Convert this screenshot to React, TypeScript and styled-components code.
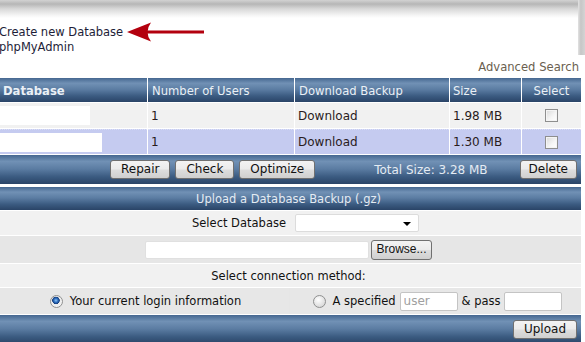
import styled, { createGlobalStyle } from "styled-components"

const FONT = `"DejaVu Sans", Verdana, sans-serif`

const Global = createGlobalStyle`
  html, body {
    margin: 0;
    padding: 0;
    background: #fff;
    overflow: hidden;
  }
  body {
    font-family: ${FONT};
    font-size: 11.5px;
  }
`

const barGradient = `linear-gradient(#456790 0%, #7191b5 22%, #5b7ca2 48%, #3b5b81 75%, #2a4467 100%)`

const Page = styled.div`
  width: 589px;
  margin-left: -4px;
`

const TopFrame = styled.div`
  height: 55px;
  display: flex;
  background: linear-gradient(#d2d2d2 0, #b6b6b6 4px, #d9d9d9 9px, #f4f4f4 15px, #fff 18px);
`

const TopContent = styled.div`
  flex: 1;
  padding: 25px 0 0 3px;
  display: flex;
  flex-direction: column;
  gap: 1px;
`

const ShadowStrip = styled.div`
  width: 7px;
  background: linear-gradient(to right, #e2e2e2, #c6c6c6 40%, #d4d4d4);
`

const CreateLine = styled.div`
  display: flex;
  align-items: center;
  height: 14px;
`

const NavLink = styled.span`
  color: #1d1d38;
  font-size: 11.5px;
  line-height: 14px;
`

const Arrow = styled.svg`
  margin-left: 3px;
  flex: none;
`

const AdvancedRow = styled.div`
  height: 23px;
  display: flex;
  align-items: center;
  justify-content: flex-end;
  padding-right: 6px;
  padding-top: 1px;
  box-sizing: border-box;
  color: #6a604f;
  font-size: 11.6px;
`

const Grid = styled.div`
  width: 585px;
  display: grid;
  grid-template-columns: 151px 146px 154px 71px 59px;
  column-gap: 1px;
  row-gap: 1px;
  background: #fff;
`

const HeadCell = styled.div<{ $bold?: boolean; $center?: boolean; $pad: number }>`
  height: 24px;
  display: flex;
  align-items: center;
  justify-content: ${(p) => (p.$center ? "center" : "flex-start")};
  padding-left: ${(p) => p.$pad}px;
  background: ${barGradient};
  color: #eaf0f6;
  font-weight: ${(p) => (p.$bold ? "bold" : "normal")};
  font-size: 11.6px;
  padding-top: 1px;
  box-sizing: border-box;
`

const Cell = styled.div<{ $alt?: boolean; $center?: boolean }>`
  height: 25px;
  display: flex;
  align-items: center;
  justify-content: ${(p) => (p.$center ? "center" : "flex-start")};
  padding-left: ${(p) => (p.$center ? 0 : 3)}px;
  background: ${(p) => (p.$alt ? "#c5cbf0" : "#f1f1f1")};
  border-top: ${(p) => (p.$alt ? "1px dotted #d9ddf6" : "none")};
  box-sizing: border-box;
  color: #2a1c1c;
  font-size: 12px;
`

const Redacted = styled.div<{ $w: number }>`
  width: ${(p) => p.$w}px;
  height: 19px;
  background: #fff;
  margin-left: -3px;
`

const Checkbox = styled.span`
  width: 11px;
  height: 11px;
  border: 1px solid #8e8e8e;
  background: linear-gradient(135deg, #d8d8d8, #f6f6f6 60%, #fff);
  box-shadow: inset 0 0 0 1px #f4f4f4;
`

const Bar = styled.div<{ $h: number; $center?: boolean }>`
  grid-column: 1 / -1;
  height: ${(p) => p.$h}px;
  display: flex;
  align-items: center;
  justify-content: ${(p) => (p.$center ? "center" : "flex-start")};
  background: ${barGradient};
  color: #e4ebf3;
  font-size: 11.5px;
  box-sizing: border-box;
`

const ActionBar = styled(Bar)`
  padding: 0 4px 0 114px;
  gap: 5px;
`

const Button = styled.button`
  height: 19px;
  padding: 0 10px;
  border: 1px solid #707070;
  border-radius: 3px;
  background: linear-gradient(#f3f3f3 0%, #ebebeb 48%, #dddddd 52%, #cfcfcf 100%);
  font-family: ${FONT};
  font-size: 12px;
  color: #111;
  line-height: 17px;
  cursor: pointer;
`

const TotalSize = styled.span`
  margin-left: 54px;
  font-size: 12px;
`

const RightButton = styled(Button)`
  margin-left: auto;
  padding: 0 8px;
`

const Gap = styled.div`
  height: 3px;
`

const Panel = styled.div`
  width: 585px;
  display: flex;
  flex-direction: column;
  gap: 1px;
  background: #fff;
`

const FormRow = styled.div<{ $h: number; $dark?: boolean }>`
  height: ${(p) => p.$h}px;
  display: flex;
  align-items: center;
  justify-content: center;
  background: ${(p) => (p.$dark ? "#e6e6e6" : "#f1f1f1")};
  color: #111;
  font-size: 11.5px;
`

const HalfGrid = styled.div`
  display: grid;
  grid-template-columns: 293px 291px;
  column-gap: 1px;
  width: 100%;
  height: 100%;
`

const Half = styled.div<{ $end?: boolean }>`
  display: flex;
  align-items: center;
  justify-content: ${(p) => (p.$end ? "flex-end" : "flex-start")};
  padding: ${(p) => (p.$end ? "0 3px 0 0" : "0 0 0 5px")};
  background: inherit;
`

const Option = styled.div<{ $shift: number }>`
  display: flex;
  align-items: center;
  justify-content: center;
  gap: 4px;
  padding-left: ${(p) => p.$shift}px;
  background: #e7e7e7;
`

const SelectBox = styled.div`
  width: 124px;
  height: 18px;
  box-sizing: border-box;
  background: #fff;
  border: 1px solid #dcdcdc;
  border-radius: 2px;
  position: relative;

  &::after {
    content: "";
    position: absolute;
    right: 7px;
    top: 7px;
    border-left: 4px solid transparent;
    border-right: 4px solid transparent;
    border-top: 4px solid #000;
  }
`

const FileBox = styled.div`
  width: 224px;
  height: 18px;
  box-sizing: border-box;
  background: #fff;
  border: 1px solid #e0e0e0;
  border-radius: 2px;
`

const BrowseButton = styled(Button)`
  font-family: "Liberation Sans", Arial, sans-serif;
  height: 20px;
  width: 61px;
  padding: 0;
  margin-left: 2px;
`

const Radio = styled.span<{ $on?: boolean }>`
  width: 11px;
  height: 11px;
  border-radius: 50%;
  border: 1px solid #8f9090;
  background: ${(p) =>
    p.$on
      ? "radial-gradient(circle at 45% 40%, #8cc4f4 0, #2f6fc0 2px, #163e7c 3.5px, #ececec 4px, #fafafa 100%)"
      : "radial-gradient(circle at 40% 35%, #ffffff 0, #e6e6e6 50%, #cfcfcf 100%)"};
  margin-right: 3px;
`

const TextBox = styled.input`
  width: 58px;
  height: 19px;
  box-sizing: border-box;
  border: 1px solid #c4c4c4;
  border-radius: 2px;
  padding: 0 3px;
  font-family: ${FONT};
  font-size: 12px;
  background: #fff;

  &::placeholder {
    color: #a0a0a0;
  }
`

const UploadBar = styled(Bar)`
  justify-content: flex-end;
  padding-right: 4px;
`

const headers = [
  { label: "Database", bold: true, pad: 7 },
  { label: "Number of Users", pad: 4 },
  { label: "Download Backup", pad: 4 },
  { label: "Size", pad: 3 },
  { label: "Select", center: true, pad: 0 },
]

const backups = [
  { redact: 94, users: 1, size: "1.98 MB" },
  { redact: 106, users: 1, size: "1.30 MB" },
]

export default function App() {
  return (
    <>
      <Global />
      <Page>
        <TopFrame>
          <TopContent>
            <CreateLine>
              <NavLink>Create new Database</NavLink>
              <Arrow width="80" height="22" viewBox="0 0 80 22">
                <path d="M20 11 H78" stroke="#b3000e" strokeWidth="3" />
                <path d="M1 11 L25 1.5 Q18 11 25 20.5 Z" fill="#b3000e" />
              </Arrow>
            </CreateLine>
            <NavLink>phpMyAdmin</NavLink>
          </TopContent>
          <ShadowStrip />
        </TopFrame>
        <AdvancedRow>Advanced Search</AdvancedRow>

        <Grid>
          {headers.map((h) => (
            <HeadCell key={h.label} $bold={h.bold} $center={h.center} $pad={h.pad}>
              {h.label}
            </HeadCell>
          ))}
          {backups.map((b, i) => [
            <Cell key={`d${i}`} $alt={i === 1}>
              <Redacted $w={b.redact} />
            </Cell>,
            <Cell key={`u${i}`} $alt={i === 1}>{b.users}</Cell>,
            <Cell key={`l${i}`} $alt={i === 1}>Download</Cell>,
            <Cell key={`s${i}`} $alt={i === 1}>{b.size}</Cell>,
            <Cell key={`c${i}`} $alt={i === 1} $center>
              <Checkbox />
            </Cell>,
          ])}
          <ActionBar $h={29}>
            <Button>Repair</Button>
            <Button>Check</Button>
            <Button>Optimize</Button>
            <TotalSize>Total Size: 3.28 MB</TotalSize>
            <RightButton>Delete</RightButton>
          </ActionBar>
        </Grid>

        <Gap />

        <Panel>
          <Bar $h={23} $center>Upload a Database Backup (.gz)</Bar>
          <FormRow $h={24}>
            <HalfGrid>
              <Half $end>Select Database</Half>
              <Half>
                <SelectBox />
              </Half>
            </HalfGrid>
          </FormRow>
          <FormRow $h={27} $dark>
            <FileBox />
            <BrowseButton>Browse...</BrowseButton>
          </FormRow>
          <FormRow $h={23}>Select connection method:</FormRow>
          <FormRow $h={26} $dark>
            <HalfGrid>
              <Option $shift={6}>
                <Radio $on />
                Your current login information
              </Option>
              <Option $shift={4}>
                <Radio />
                A specified
                <TextBox placeholder="user" />
                &amp; pass
                <TextBox />
              </Option>
            </HalfGrid>
          </FormRow>
          <UploadBar $h={29}>
            <Button>Upload</Button>
          </UploadBar>
        </Panel>
      </Page>
    </>
  )
}
